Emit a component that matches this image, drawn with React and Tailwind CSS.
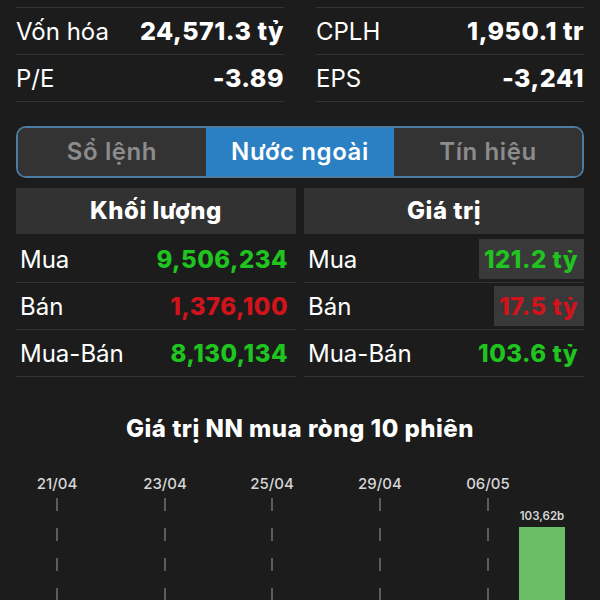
const stats = [
  [
    { label: "Vốn hóa", value: "24,571.3 tỷ" },
    { label: "P/E", value: "-3.89" },
  ],
  [
    { label: "CPLH", value: "1,950.1 tr" },
    { label: "EPS", value: "-3,241" },
  ],
];

const tabs = ["Sổ lệnh", "Nước ngoài", "Tín hiệu"];

const volume = [
  { label: "Mua", value: "9,506,234", color: "text-[#1fc41f]" },
  { label: "Bán", value: "1,376,100", color: "text-[#d3131b]" },
  { label: "Mua-Bán", value: "8,130,134", color: "text-[#1fc41f]" },
];

const amount = [
  { label: "Mua", value: "121.2 tỷ", color: "text-[#1fc41f]", box: true },
  { label: "Bán", value: "17.5 tỷ", color: "text-[#d3131b]", box: true },
  { label: "Mua-Bán", value: "103.6 tỷ", color: "text-[#1fc41f]" },
];

const dates = ["21/04", "23/04", "25/04", "29/04", "06/05"];

const StatColumn = ({ rows }) => (
  <div className="flex-1 border-t border-[#333]">
    {rows.map((row) => (
      <div
        key={row.label}
        className="h-[47px] pt-[2px] flex items-center justify-between border-b border-[#333]"
      >
        <span className="text-[24px] text-white">{row.label}</span>
        <span className="text-[25px] font-extrabold tracking-[0.5px] text-white">
          {row.value}
        </span>
      </div>
    ))}
  </div>
);

const FlowTable = ({ title, rows, pr }) => (
  <div className="flex-1">
    <div className="h-[46px] bg-[#323232] flex items-center justify-center text-[24px] font-extrabold tracking-[0.5px] text-white">
      {title}
    </div>
    <div className="mt-[2px]">
      {rows.map((row) => (
        <div
          key={row.label}
          className="h-[47px] flex items-center justify-between border-b border-[#333] pl-[4px]"
        >
          <span className="text-[24px] text-white pt-[2px]">{row.label}</span>
          <span
            className={`h-[40px] pt-[2px] flex items-center text-[24px] font-extrabold tracking-[0.5px] ${row.color} ${
              row.box ? "bg-[#393939] pl-[5px]" : ""
            } ${pr}`}
          >
            {row.value}
          </span>
        </div>
      ))}
    </div>
  </div>
);

const Chart = () => {
  const xs = [57, 165, 272, 380, 488];
  return (
    <svg width="600" height="140" viewBox="0 0 600 140" className="block">
      {dates.map((d, i) => (
        <g key={d}>
          <text
            x={xs[i]}
            y="23"
            textAnchor="middle"
            fill="#d6d6d6"
            fontSize="15"
            fontWeight="500"
            fontFamily="Inter, sans-serif"
          >
            {d}
          </text>
          {[32, 62, 92, 122].map((y) => (
            <line
              key={y}
              x1={xs[i]}
              x2={xs[i]}
              y1={y}
              y2={y + 13}
              stroke="#5c5c5c"
              strokeWidth="2"
            />
          ))}
        </g>
      ))}
      <text
        x="542"
        y="54"
        textAnchor="middle"
        fill="#d6d6d6"
        fontSize="11.5"
        fontWeight="600"
        fontFamily="Inter, sans-serif"
      >
        103,62b
      </text>
      <rect x="519" y="61" width="46" height="90" fill="#69be66" />
    </svg>
  );
};

export default function App() {
  return (
    <div className="w-[600px] h-[600px] overflow-hidden bg-[#1c1c1c] font-['Inter',sans-serif]">
      <div className="px-4 pt-[7px]">
        {/* thông tin cơ bản */}
        <div className="flex gap-8">
          {stats.map((rows, i) => (
            <StatColumn key={i} rows={rows} />
          ))}
        </div>

        {/* tabs */}
        <div className="mt-[24px] h-[52px] flex rounded-[10px] border-2 border-[#4d7ca2] overflow-hidden">
          {tabs.map((t) => (
            <div
              key={t}
              className={`flex-1 flex items-center justify-center text-[24px] font-semibold tracking-[0.6px] ${
                t === "Nước ngoài"
                  ? "bg-[#2a80c2] text-white"
                  : "bg-[#333333] text-[#8c8c8c]"
              }`}
            >
              {t}
            </div>
          ))}
        </div>

        {/* khối lượng / giá trị */}
        <div className="mt-[10px] flex gap-2">
          <FlowTable title="Khối lượng" rows={volume} pr="pr-[8px]" />
          <FlowTable title="Giá trị" rows={amount} pr="pr-[6px]" />
        </div>
      </div>

      <div className="mt-[36px] text-center text-[24px] leading-[32px] font-extrabold tracking-[0.5px] text-white">
        Giá trị NN mua ròng 10 phiên
      </div>
      <div className="mt-[21px]">
        <Chart />
      </div>
    </div>
  );
}
